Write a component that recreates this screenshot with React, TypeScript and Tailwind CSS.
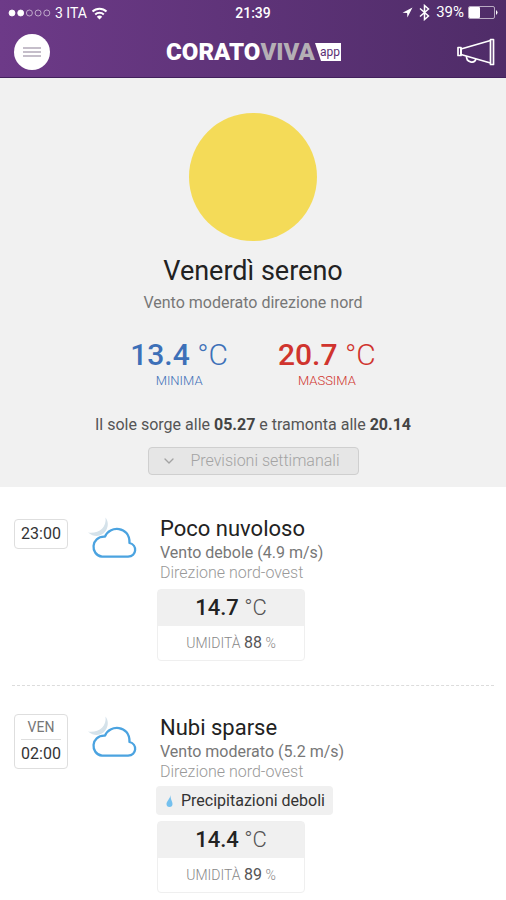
import { ChevronDown } from 'lucide-react'

interface Forecast {
    day?: string
    time: string
    title: string
    wind: string
    direction: string
    rain?: string
    temp: string
    humidity: number
}

const forecasts: Forecast[] = [
    { time: '23:00', title: 'Poco nuvoloso', wind: 'Vento debole (4.9 m/s)', direction: 'Direzione nord-ovest', temp: '14.7', humidity: 88 },
    { day: 'VEN', time: '02:00', title: 'Nubi sparse', wind: 'Vento moderato (5.2 m/s)', direction: 'Direzione nord-ovest', rain: 'Precipitazioni deboli', temp: '14.4', humidity: 89 },
]

const signal = [true, true, false, false, false]

function StatusBar() {
    return (
        <div className="grid grid-cols-3 items-center h-[26px] px-2 text-sm text-white">
            <div className="flex items-center gap-1">
                <svg width="43" height="8" viewBox="0 0 43 8" stroke="white" strokeWidth="0.8">
                    {signal.map((on, idx) => (
                        <circle key={idx} cx={4 + idx * 8.7} cy="4" r="3" fill={on ? 'white' : 'none'} strokeOpacity={on ? 1 : 0.7} />
                    ))}
                </svg>
                <span className="whitespace-nowrap">3 ITA</span>
                <svg width="17" height="13" viewBox="0 0 17 13" fill="none" stroke="white" strokeWidth="2">
                    <path d="M1.5 4.5a10 10 0 0 1 14 0M4.2 7.5a6.2 6.2 0 0 1 8.6 0" />
                    <path d="M8.5 12.5 5.8 9.7a4 4 0 0 1 5.4 0z" fill="white" stroke="none" />
                </svg>
            </div>
            <span className="text-center font-medium">21:39</span>
            <div className="flex items-center justify-end gap-1">
                <svg width="11" height="11" viewBox="0 0 11 11" fill="white">
                    <path d="M10.5.5.5 5.7l4.6.3.3 4.5z" />
                </svg>
                <svg className="mx-0.5" width="11" height="17" viewBox="0 0 11 17" fill="none" stroke="white" strokeWidth="1.5">
                    <path d="m1 4.5 8.5 7.5-4 3.5v-14l4 3.5L1 12.5" />
                </svg>
                <span className="text-[15px]">39%</span>
                <svg width="30" height="13" viewBox="0 0 30 13">
                    <rect x=".5" y=".5" width="26" height="12" rx="1.5" fill="none" stroke="white" strokeOpacity=".6" />
                    <rect x="1" y="1" width="11" height="11" rx="1" fill="white" />
                    <path d="M28 4q3 2.500 0 5z" fill="white" />
                </svg>
            </div>
        </div>
    )
}

function Header() {
    return (
        <header className="bg-linear-to-r from-[#6d3a88] to-[#4f2c68] border-b border-[#42205c]">
            <StatusBar />
            <div className="flex items-center justify-between h-[51px] pl-3.5 pr-[11px]">
                <button aria-label="Menu" className="flex items-center justify-center size-9 rounded-full bg-white">
                    <svg width="18" height="10" viewBox="0 0 18 10" stroke="#b3a9b9" strokeWidth="1.3">
                        <path d="M0 1h18M0 5h18M0 9h18" />
                    </svg>
                </button>
                <div className="flex items-center text-2xl leading-6 font-black">
                    <span className="text-white">CORATO</span>
                    <span className="text-[#b5afb5]">VIVA</span>
                    <span className="relative flex items-center justify-center w-[26px] h-[18px] pl-1 text-xs font-normal text-[#5b3175]">
                        <svg className="absolute inset-0" width="26" height="18" viewBox="0 0 26 18">
                            <path d="M0 0h26v18H6z" fill="white" />
                        </svg>
                        <span className="relative leading-3">app</span>
                    </span>
                </div>
                <button aria-label="Segnalazioni">
                    <svg width="38" height="28" viewBox="0 0 38 28" fill="none" stroke="white" strokeWidth="1.7" strokeLinejoin="round">
                        <path d="M33.500 2.500 4 11v5.500l29.500 8.500" />
                        <path d="M33.500 1.500h3v25h-3z" />
                        <path d="M1 9.500h3v8H1z" />
                        <path d="M9.500 18c-.5 6.500 8 8 9.500 3" />
                    </svg>
                </button>
            </div>
        </header>
    )
}

function CloudyNight() {
    return (
        <svg width="50" height="42" viewBox="0 0 50 42" fill="none">
            <path d="M17.500.5C25 10 13 26 0 15.500 10 17 19 11 17.500.5z" fill="#d5e2ea" />
            <path d="M14 39.700H40c9-.5 9.500-11.700 1.500-13.700C42 8.500 21 8.500 17 19.700 2.500 19 2 38 14 39.700z" fill="white" stroke="#4ba3e0" strokeWidth="2.300" strokeLinejoin="round" />
        </svg>
    )
}

function ForecastRow({ item }: { item: Forecast }) {
    return (
        <li className="flex items-start pt-7 pb-6 mx-3 border-b border-dashed border-[#dcdcdc] last:border-b-0">
            <div className={`flex flex-col items-center w-[54px] ml-0.5 border border-[#dedede] rounded-sm ${item.day ? '' : 'mt-1 py-0.5'}`}>
                {item.day && (
                    <span className="w-10 border-b border-[#dedede] text-center text-sm leading-6 text-[#777]">{item.day}</span>
                )}
                <span className={`text-base text-[#333] ${item.day ? 'leading-7' : 'leading-6'}`}>{item.time}</span>
            </div>
            <div className="w-[72px] shrink-0 ml-5 mt-0.5">
                <CloudyNight />
            </div>
            <div className="flex flex-col items-start">
                <h2 className="text-[22px] leading-7 text-[#222]">{item.title}</h2>
                <p className="text-base leading-5 text-[#777]">{item.wind}</p>
                <p className="text-base leading-5 font-light text-[#999]">{item.direction}</p>
                {item.rain && (
                    <div className="flex items-center gap-2 h-[29px] mt-1 -ml-1 pl-2.5 pr-2 rounded-sm bg-[#f0f0f0] text-base text-[#333]">
                        <svg width="7" height="12" viewBox="0 0 7 12" fill="#74c0ee">
                            <path d="M4.500 0C4 4 .5 6 .5 9a3 3 0 0 0 6 0c0-3-2-4-2-9z" />
                        </svg>
                        {item.rain}
                    </div>
                )}
                <div className="w-[148px] mt-1.5 -ml-[3px] border border-[#efefef] rounded-sm text-center">
                    <div className="bg-[#f0f0f0] text-[22px] leading-9 text-[#222]">
                        <span className="font-medium">{item.temp}</span> <span className="font-light text-[#555]">°C</span>
                    </div>
                    <div className="text-sm leading-[34px] font-light text-[#888]">
                        UMIDITÀ <span className="text-base font-normal text-[#555] leading-[34px]">{item.humidity}</span> %
                    </div>
                </div>
            </div>
        </li>
    )
}

export default function App() {
    return (
        <div className="min-h-screen bg-white font-['Roboto',sans-serif]">
            <Header />
            <main>
                <section className="flex flex-col items-center pt-[35px] pb-3 bg-[#f1f1f1] text-center">
                    <div className="size-32 rounded-full bg-[#f4db58]" />
                    <h1 className="mt-3 text-[27px] leading-9 text-[#222]">Venerdì sereno</h1>
                    <p className="text-base leading-7 text-[#777]">Vento moderato direzione nord</p>
                    <div className="flex gap-[50px] mt-5">
                        <div className="text-[#3d70b8]">
                            <div className="text-[30px] leading-9"><span className="font-medium">13.4</span> <span className="font-light">°C</span></div>
                            <div className="text-[13px] leading-4 font-light">MINIMA</div>
                        </div>
                        <div className="text-[#d0342e]">
                            <div className="text-[30px] leading-9"><span className="font-medium">20.7</span> <span className="font-light">°C</span></div>
                            <div className="text-[13px] leading-4 font-light">MASSIMA</div>
                        </div>
                    </div>
                    <p className="mt-6 text-base leading-6 text-[#555]">
                        Il sole sorge alle <b className="text-[#444]">05.27</b> e tramonta alle <b className="text-[#444]">20.14</b>
                    </p>
                    <button className="flex items-center justify-between w-[211px] h-7 mt-2.5 pl-3 pr-[18px] border border-[#cfcfcf] rounded-sm bg-[#e6e6e6] text-base font-light text-[#a3a3a3]">
                        <ChevronDown className="size-4" />
                        Previsioni settimanali
                    </button>
                </section>
                <ul>
                    {forecasts.map((item) => (
                        <ForecastRow key={item.time} item={item} />
                    ))}
                </ul>
            </main>
        </div>
    )
}
